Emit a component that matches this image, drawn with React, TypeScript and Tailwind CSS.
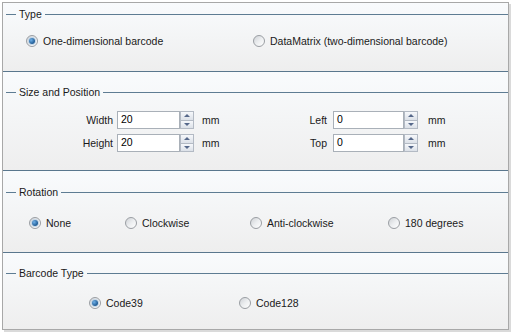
import React from 'react';

const font = { fontFamily: '"Liberation Sans", Arial, sans-serif' };

const Radio: React.FC<{ checked?: boolean; label: string; className?: string }> = ({ checked, label, className }) => (
  <div className={`flex items-center h-[14px] ${className ?? ''}`}>
    <span className="relative flex items-center justify-center w-[12px] h-[12px] rounded-full border border-[#9a9ea3] bg-gradient-to-br from-[#cfd2d6] via-[#eceef0] to-white shrink-0">
      {checked && (
        <span className="w-[6px] h-[6px] rounded-full bg-[radial-gradient(circle_at_35%_35%,#6fb0e8,#1d5a94_70%)] shadow-[0_0_0_1px_#c3d5e6]" />
      )}
    </span>
    <span className="ml-[5px] text-[10.5px] text-[#1a1a1a] leading-none whitespace-nowrap">{label}</span>
  </div>
);

const Header: React.FC<{ title: string }> = ({ title }) => (
  <div className="flex items-center h-[14px] pl-[3px]">
    <span className="w-[10px] h-px bg-[#5e7c93]" />
    <span className="ml-[3px] mr-[3px] text-[10.5px] text-[#1a1a1a] leading-none">{title}</span>
    <span className="flex-1 h-px bg-[#5e7c93]" />
  </div>
);

const Spinner: React.FC = () => (
  <div className="flex flex-col w-[14px] h-[18px]">
    <div className="flex-1 flex items-center justify-center border border-[#b3bac4] bg-gradient-to-b from-[#f6f8fb] to-[#dce1e8]">
      <span className="w-0 h-0 border-l-[3px] border-r-[3px] border-b-[3px] border-l-transparent border-r-transparent border-b-[#56688a]" />
    </div>
    <div className="flex-1 flex items-center justify-center border border-t-0 border-[#b3bac4] bg-gradient-to-b from-[#f6f8fb] to-[#dce1e8]">
      <span className="w-0 h-0 border-l-[3px] border-r-[3px] border-t-[3px] border-l-transparent border-r-transparent border-t-[#56688a]" />
    </div>
  </div>
);

const Field: React.FC<{ label: string; value: string; labelW: string; inputW: string; gap: string; mmGap: string }> = ({
  label,
  value,
  labelW,
  inputW,
  gap,
  mmGap,
}) => (
  <div className="flex items-center h-[18px]">
    <span className={`${labelW} text-right text-[10.5px] text-[#1a1a1a] leading-none`}>{label}</span>
    <div className={`${gap} ${inputW} h-[18px] border border-[#a9b0b8] bg-white flex items-center pl-[3px] text-[10.5px] text-black`}>
      {value}
    </div>
    <Spinner />
    <span className={`${mmGap} text-[10.5px] text-[#1a1a1a] leading-none`}>mm</span>
  </div>
);

const sectionBg = 'bg-gradient-to-b from-[#f9fbfd] to-[#eeeeee]';

export default function App() {
  return (
    <div className="w-[515px] h-[336px] bg-white pt-[2px] pl-[2px]" style={font}>
      <div className="w-[507px] h-[328px] border border-[#a8a8a8] shadow-[2px_2px_0_#dadada] flex flex-col overflow-hidden">
        {/* Type */}
        <div className={`h-[68px] pt-[4px] ${sectionBg}`}>
          <Header title="Type" />
          <div className="flex mt-[13px] pl-[23px]">
            <Radio checked label="One-dimensional barcode" className="w-[227px]" />
            <Radio label="DataMatrix (two-dimensional barcode)" />
          </div>
        </div>

        {/* Size and Position */}
        <div className={`h-[99px] border-t border-[#5a778e] pt-[13px] ${sectionBg}`}>
          <Header title="Size and Position" />
          <div className="flex mt-[12px] pl-[57px]">
            <div className="w-[230px] flex flex-col gap-[5px]">
              <Field label="Width" value="20" labelW="w-[53px]" inputW="w-[63px]" gap="ml-[4px]" mmGap="ml-[8px]" />
              <Field label="Height" value="20" labelW="w-[53px]" inputW="w-[63px]" gap="ml-[4px]" mmGap="ml-[8px]" />
            </div>
            <div className="flex flex-col gap-[5px]">
              <Field label="Left" value="0" labelW="w-[37px]" inputW="w-[71px]" gap="ml-[6px]" mmGap="ml-[10px]" />
              <Field label="Top" value="0" labelW="w-[37px]" inputW="w-[71px]" gap="ml-[6px]" mmGap="ml-[10px]" />
            </div>
          </div>
        </div>

        {/* Rotation */}
        <div className={`h-[82px] border-t border-[#5a778e] pt-[14px] ${sectionBg}`}>
          <Header title="Rotation" />
          <div className="flex mt-[17px] pl-[26px]">
            <Radio checked label="None" className="w-[96px]" />
            <Radio label="Clockwise" className="w-[125px]" />
            <Radio label="Anti-clockwise" className="w-[138px]" />
            <Radio label="180 degrees" />
          </div>
        </div>

        {/* Barcode Type */}
        <div className={`flex-1 border-t border-[#5a778e] pt-[13px] ${sectionBg}`}>
          <Header title="Barcode Type" />
          <div className="flex mt-[16px] pl-[86px]">
            <Radio checked label="Code39" className="w-[150px]" />
            <Radio label="Code128" />
          </div>
        </div>
      </div>
    </div>
  );
}
